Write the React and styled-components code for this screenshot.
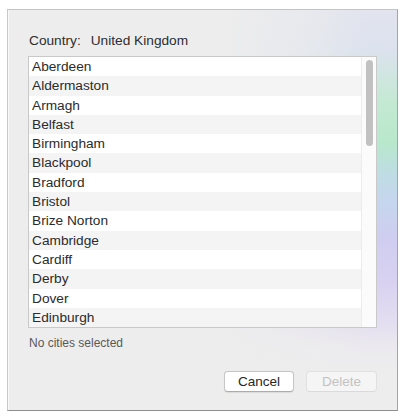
import React from "react";
import styled, { createGlobalStyle } from "styled-components";

const Global = createGlobalStyle`
  html, body { margin: 0; padding: 0; background: #ffffff; }
  body { font-family: "Liberation Sans", Arial, sans-serif; }
`;

const Page = styled.div`
  padding: 9px 0 0 7px;
`;

const Panel = styled.div`
  box-sizing: border-box;
  width: 391px;
  height: 402px;
  border-top: 1px solid #c4c4c6;
  border-left: 1px solid #c8c8c8;
  border-right: 1px solid #a4a4a6;
  border-bottom: 1px solid #8f8f8f;
  box-shadow: inset 1px 0 0 #f9f9f9;
  padding: 23px 20px 0 20px;
  display: flex;
  flex-direction: column;
  background:
    linear-gradient(to right, #ededed 0%, #ededed 55%, rgba(237,237,237,0.55) 78%, rgba(237,237,237,0.1) 90%, rgba(237,237,237,0) 93%),
    linear-gradient(to bottom,
      #e2e4ee 0%,
      #dce2ee 10%,
      #c4e9d3 23%,
      #b8e8cb 33%,
      #bfdce4 41%,
      #c6d6ee 48%,
      #cfcdf0 57%,
      #d8d2f0 68%,
      #e3def0 78%,
      #ebe9ee 84%,
      #ededed 90%,
      #ededed 100%);
`;

const Title = styled.div`
  display: flex;
  gap: 10px;
  font-size: 13.7px;
  line-height: 16px;
  color: #2e2e2e;
  padding-left: 1px;
`;

const ListBox = styled.div`
  margin-top: 7px;
  box-sizing: border-box;
  width: 349px;
  height: 272px;
  border: 1px solid #c9c9c9;
  background: #ffffff;
  display: flex;
  overflow: hidden;
`;

const Rows = styled.div`
  flex: 1;
  overflow: hidden;
`;

const Row = styled.div`
  height: 19.3px;
  line-height: 19.3px;
  padding-left: 3px;
  font-size: 13.7px;
  color: #2b2b2b;
  background: ${(p) => (p.$odd ? "#f4f4f4" : "#ffffff")};
  white-space: nowrap;
`;

const Track = styled.div`
  width: 14px;
  border-left: 1px solid #ececec;
  background: #fbfbfb;
  display: flex;
  justify-content: center;
`;

const Thumb = styled.div`
  margin-top: 3px;
  width: 7px;
  height: 86px;
  border-radius: 4px;
  background: #c1c1c1;
`;

const Status = styled.div`
  margin-top: 8px;
  padding-left: 1px;
  font-size: 12px;
  line-height: 14px;
  color: #595959;
`;

const Buttons = styled.div`
  margin-top: 21px;
  width: 349px;
  display: flex;
  justify-content: flex-end;
  gap: 12px;
`;

const Button = styled.button`
  box-sizing: border-box;
  width: ${(p) => p.$w}px;
  height: 21px;
  padding: 0;
  border-radius: 4px;
  font-family: "Liberation Sans", Arial, sans-serif;
  font-size: 13.5px;
  line-height: 19px;
  background: ${(p) => (p.disabled ? "#f5f5f5" : "#ffffff")};
  color: ${(p) => (p.disabled ? "#c3c3c3" : "#262626")};
  border: 1px solid ${(p) => (p.disabled ? "#e0e0e0" : "#c6c6c6")};
  border-bottom-color: ${(p) => (p.disabled ? "#dadada" : "#acacac")};
  box-shadow: ${(p) => (p.disabled ? "none" : "0 0.5px 1px rgba(0,0,0,0.08)")};
`;

const cities = [
  "Aberdeen",
  "Aldermaston",
  "Armagh",
  "Belfast",
  "Birmingham",
  "Blackpool",
  "Bradford",
  "Bristol",
  "Brize Norton",
  "Cambridge",
  "Cardiff",
  "Derby",
  "Dover",
  "Edinburgh",
];

export default function App() {
  return (
    <>
      <Global />
      <Page>
        <Panel>
          <Title>
            <span>Country:</span>
            <span>United Kingdom</span>
          </Title>
          <ListBox>
            <Rows>
              {cities.map((c, i) => (
                <Row key={c} $odd={i % 2 === 1}>
                  {c}
                </Row>
              ))}
            </Rows>
            <Track>
              <Thumb />
            </Track>
          </ListBox>
          <Status>No cities selected</Status>
          <Buttons>
            <Button $w={70}>Cancel</Button>
            <Button $w={71} disabled>
              Delete
            </Button>
          </Buttons>
        </Panel>
      </Page>
    </>
  );
}
